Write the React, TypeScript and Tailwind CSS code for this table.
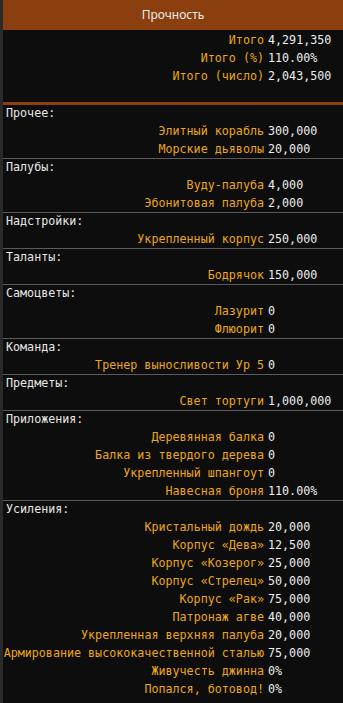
import React from "react";

type Row = [string, string];

interface Section {
  title: string;
  rows: Row[];
}

const totals: Row[] = [
  ["Итого", "4,291,350"],
  ["Итого (%)", "110.00%"],
  ["Итого (число)", "2,043,500"],
];

const sections: Section[] = [
  { title: "Прочее:", rows: [["Элитный корабль", "300,000"], ["Морские дьяволы", "20,000"]] },
  { title: "Палубы:", rows: [["Вуду-палуба", "4,000"], ["Эбонитовая палуба", "2,000"]] },
  { title: "Надстройки:", rows: [["Укрепленный корпус", "250,000"]] },
  { title: "Таланты:", rows: [["Бодрячок", "150,000"]] },
  { title: "Самоцветы:", rows: [["Лазурит", "0"], ["Флюорит", "0"]] },
  { title: "Команда:", rows: [["Тренер выносливости Ур 5", "0"]] },
  { title: "Предметы:", rows: [["Свет тортуги", "1,000,000"]] },
  {
    title: "Приложения:",
    rows: [
      ["Деревянная балка", "0"],
      ["Балка из твердого дерева", "0"],
      ["Укрепленный шпангоут", "0"],
      ["Навесная броня", "110.00%"],
    ],
  },
  {
    title: "Усиления:",
    rows: [
      ["Кристальный дождь", "20,000"],
      ["Корпус «Дева»", "12,500"],
      ["Корпус «Козерог»", "25,000"],
      ["Корпус «Стрелец»", "50,000"],
      ["Корпус «Рак»", "75,000"],
      ["Патронаж агве", "40,000"],
      ["Укрепленная верхняя палуба", "20,000"],
      ["Армирование высококачественной сталью", "75,000"],
      ["Живучесть джинна", "0%"],
      ["Попался, ботовод!", "0%"],
    ],
  },
];

function StatRow({ row }: { row: Row }) {
  return (
    <div className="flex h-[18px] items-center leading-[18px]">
      <div className="w-[261px] shrink-0 whitespace-nowrap text-right text-[#eca714]">{row[0]}</div>
      <div className="pl-[4px] whitespace-nowrap text-[#eeeeee]">{row[1]}</div>
    </div>
  );
}

export default function App() {
  return (
    <div className="h-[703px] w-[343px] overflow-hidden border-l-[3px] border-[#2a2a2a] bg-[#0d0d0d] font-['DejaVu_Sans_Mono',monospace] text-[11.7px]">
      <div className="flex h-[30px] items-center justify-center bg-[#8b3f0e] font-['Noto_Sans',sans-serif] text-[12px] text-[#ececec]">
        Прочность
      </div>

      {/* totals */}
      <div className="pt-[1px] pb-[17px]">
        {totals.map((r) => (
          <StatRow key={r[0]} row={r} />
        ))}
      </div>

      <div className="border-t-[3px] border-[#8b3f0e]">
        {sections.map((s, idx) => (
          <div key={s.title} className={idx === 0 ? "" : "border-t border-[#5a5a5a]"}>
            <div className="h-[17px] pl-[3px] leading-[17px] text-[#e8e8e8]">{s.title}</div>
            {s.rows.map((r) => (
              <StatRow key={r[0]} row={r} />
            ))}
          </div>
        ))}
      </div>
    </div>
  );
}
